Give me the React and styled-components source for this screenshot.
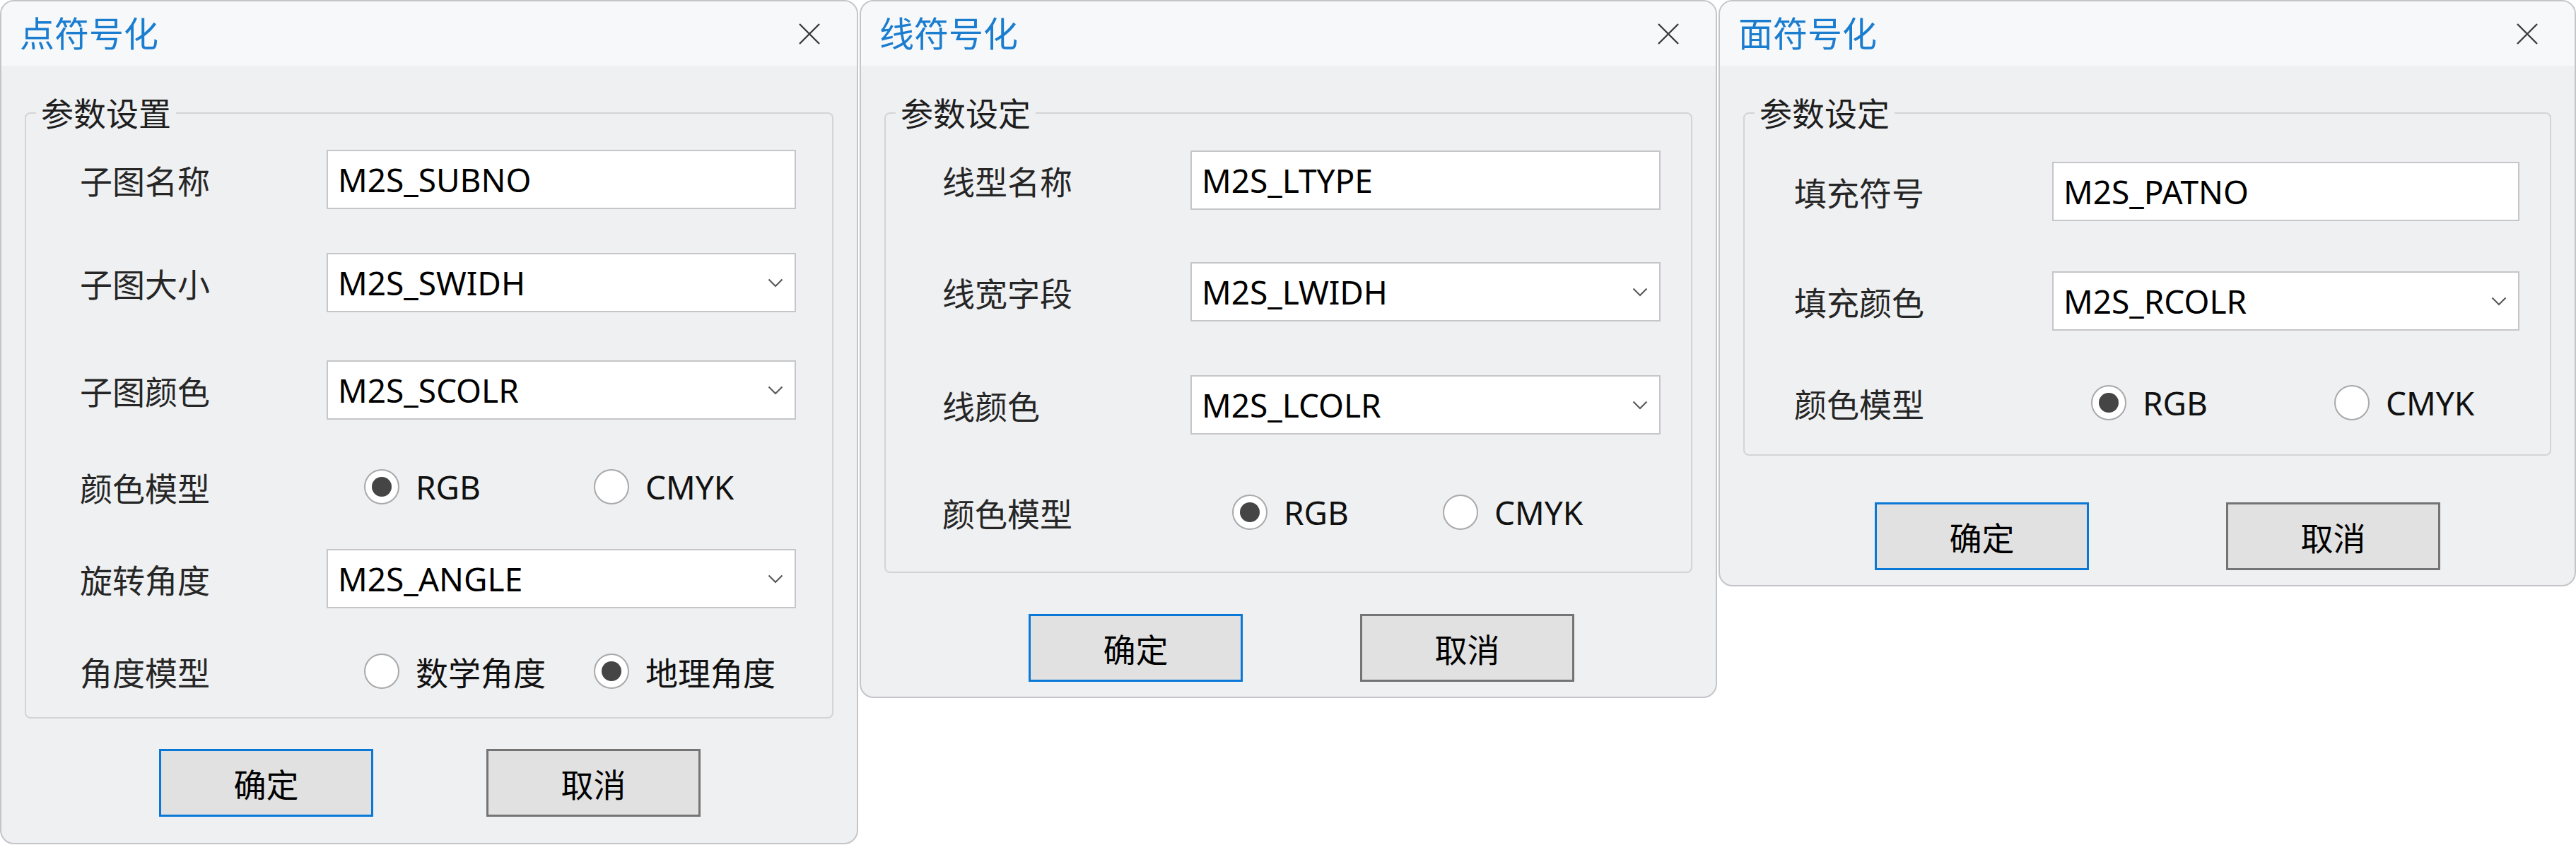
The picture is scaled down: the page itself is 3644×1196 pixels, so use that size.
import React from 'react'
import styled, { createGlobalStyle, ThemeProvider } from 'styled-components'

const GlobalStyle = createGlobalStyle`
    html, body {
        margin: 0;
        padding: 0;
        background: #ffffff;
    }
    body {
        font-family: "Noto Sans", "Noto Sans CJK SC", sans-serif;
        overflow: hidden;
    }
    * {
        box-sizing: border-box;
    }
`

const Desktop = styled.div`
    display: flex;
    align-items: flex-start;
    gap: 2px;
    width: 3644px;
    height: 1196px;
`

const Window = styled.div`
    width: ${p => p.theme.width}px;
    display: flex;
    flex-direction: column;
    background: #eff0f2;
    border: 2px solid #c4c5c9;
    border-radius: 20px;
    overflow: hidden;
`

const TitleBar = styled.div`
    height: 91px;
    display: flex;
    align-items: center;
    justify-content: space-between;
    padding: 0 51px 0 26px;
    background: #f7f8f9;
`

const Title = styled.div`
    font-size: 49px;
    color: #1a7dd0;
    line-height: 1;
`

const CloseButton = styled.div`
    width: 32px;
    height: 32px;
    display: flex;
    svg {
        display: block;
    }
`

const Body = styled.div`
    padding: 0 33px ${p => p.theme.bottom}px;
`

const Group = styled.fieldset`
    margin: 42px 0 0;
    padding: 0 0 ${p => p.theme.groupBottom}px;
    border: 2px solid #d3d4d8;
    border-radius: 8px;
    min-width: 0;
`

const Legend = styled.legend`
    margin-left: 14px;
    padding: 0 7px;
    font-size: 46px;
    line-height: 50px;
    color: #1e1e1e;
`

const Fields = styled.div`
    padding: 0 ${p => p.theme.padRight}px 0 ${p => p.theme.padLeft}px;
`

const Row = styled.div`
    display: grid;
    grid-template-columns: ${p => p.theme.labelWidth}px 1fr;
    align-items: center;
    height: 84px;
    margin-top: ${p => p.$mt}px;
`

const Label = styled.div`
    font-size: 46px;
    color: #262626;
    white-space: nowrap;
`

const TextBox = styled.div`
    height: 84px;
    display: flex;
    align-items: center;
    justify-content: space-between;
    padding: 0 16px 0 14px;
    background: #ffffff;
    border: 2px solid #c6c6c8;
    font-size: 46px;
    color: #000000;
`

const Chevron = styled.svg`
    width: 22px;
    height: 13px;
    flex: none;
`

const RadioGroup = styled.div`
    display: flex;
    align-items: center;
    padding-left: ${p => p.theme.radioStart}px;
`

const RadioOption = styled.div`
    display: inline-flex;
    align-items: center;
    gap: 23px;
    width: ${p => (p.$first ? `${p.theme.radioPitch}px` : 'auto')};
    font-size: 46px;
    color: #111111;
    white-space: nowrap;
`

const RadioCircle = styled.span`
    width: 50px;
    height: 50px;
    flex: none;
    border-radius: 50%;
    border: 2px solid #a9a9ab;
    background: #ffffff;
    display: flex;
    align-items: center;
    justify-content: center;
    &::after {
        content: '';
        width: 28px;
        height: 28px;
        border-radius: 50%;
        background: ${p => (p.$checked ? '#454545' : 'transparent')};
    }
`

const ButtonRow = styled.div`
    display: flex;
    gap: ${p => p.theme.buttonGap}px;
    margin-top: ${p => p.theme.buttonTop}px;
    padding-left: ${p => p.theme.buttonStart - 33}px;
`

const Button = styled.div`
    width: 303px;
    height: 96px;
    display: flex;
    align-items: center;
    justify-content: center;
    background: #e1e1e1;
    border: 3px solid ${p => (p.$primary ? '#0a78d7' : '#747474')};
    font-size: 46px;
    color: #000000;
`

function Field({ row }) {
    if (row.type === 'radio') {
        return (
            <RadioGroup>
                {row.options.map((opt, i) => (
                    <RadioOption key={opt} $first={i === 0}>
                        <RadioCircle $checked={i === row.checked} />
                        {opt}
                    </RadioOption>
                ))}
            </RadioGroup>
        )
    }
    return (
        <TextBox>
            <span>{row.value}</span>
            {row.type === 'combo' && (
                <Chevron viewBox="0 0 22 13">
                    <path d="M1.5 1.5 L11 11 L20.5 1.5" fill="none" stroke="#5a5a5a" strokeWidth="2.2" />
                </Chevron>
            )}
        </TextBox>
    )
}

function SymbolDialog({ dialog }) {
    return (
        <ThemeProvider theme={dialog.layout}>
            <Window>
                <TitleBar>
                    <Title>{dialog.title}</Title>
                    <CloseButton>
                        <svg viewBox="0 0 32 32" width="32" height="32">
                            <path d="M2 2 L30 30 M30 2 L2 30" stroke="#3c3c3c" strokeWidth="2.4" fill="none" />
                        </svg>
                    </CloseButton>
                </TitleBar>
                <Body>
                    <Group>
                        <Legend>{dialog.legend}</Legend>
                        <Fields>
                            {dialog.rows.map(row => (
                                <Row key={row.label} $mt={row.mt}>
                                    <Label>{row.label}</Label>
                                    <Field row={row} />
                                </Row>
                            ))}
                        </Fields>
                    </Group>
                    <ButtonRow>
                        <Button $primary>确定</Button>
                        <Button>取消</Button>
                    </ButtonRow>
                </Body>
            </Window>
        </ThemeProvider>
    )
}

const dialogs = [
    {
        title: '点符号化',
        legend: '参数设置',
        layout: {
            width: 1214, padLeft: 76, padRight: 51, labelWidth: 349,
            radioStart: 53, radioPitch: 325, groupBottom: 23,
            buttonStart: 223, buttonGap: 160, buttonTop: 43, bottom: 37,
        },
        rows: [
            { label: '子图名称', type: 'text', value: 'M2S_SUBNO', mt: 27 },
            { label: '子图大小', type: 'combo', value: 'M2S_SWIDH', mt: 62 },
            { label: '子图颜色', type: 'combo', value: 'M2S_SCOLR', mt: 68 },
            { label: '颜色模型', type: 'radio', options: ['RGB', 'CMYK'], checked: 0, mt: 53 },
            { label: '旋转角度', type: 'combo', value: 'M2S_ANGLE', mt: 46 },
            { label: '角度模型', type: 'radio', options: ['数学角度', '地理角度'], checked: 1, mt: 47 },
        ],
    },
    {
        title: '线符号化',
        legend: '参数设定',
        layout: {
            width: 1213, padLeft: 80, padRight: 43, labelWidth: 351,
            radioStart: 59, radioPitch: 298, groupBottom: 42,
            buttonStart: 237, buttonGap: 166, buttonTop: 58, bottom: 21,
        },
        rows: [
            { label: '线型名称', type: 'text', value: 'M2S_LTYPE', mt: 28 },
            { label: '线宽字段', type: 'combo', value: 'M2S_LWIDH', mt: 74 },
            { label: '线颜色', type: 'combo', value: 'M2S_LCOLR', mt: 76 },
            { label: '颜色模型', type: 'radio', options: ['RGB', 'CMYK'], checked: 0, mt: 68 },
        ],
    },
    {
        title: '面符号化',
        legend: '参数设定',
        layout: {
            width: 1213, padLeft: 70, padRight: 43, labelWidth: 365,
            radioStart: 55, radioPitch: 344, groupBottom: 31,
            buttonStart: 219, buttonGap: 194, buttonTop: 66, bottom: 21,
        },
        rows: [
            { label: '填充符号', type: 'text', value: 'M2S_PATNO', mt: 44 },
            { label: '填充颜色', type: 'combo', value: 'M2S_RCOLR', mt: 71 },
            { label: '颜色模型', type: 'radio', options: ['RGB', 'CMYK'], checked: 0, mt: 60 },
        ],
    },
]

export default function App() {
    return (
        <>
            <GlobalStyle />
            <Desktop>
                {dialogs.map(d => (
                    <SymbolDialog key={d.title} dialog={d} />
                ))}
            </Desktop>
        </>
    )
}
